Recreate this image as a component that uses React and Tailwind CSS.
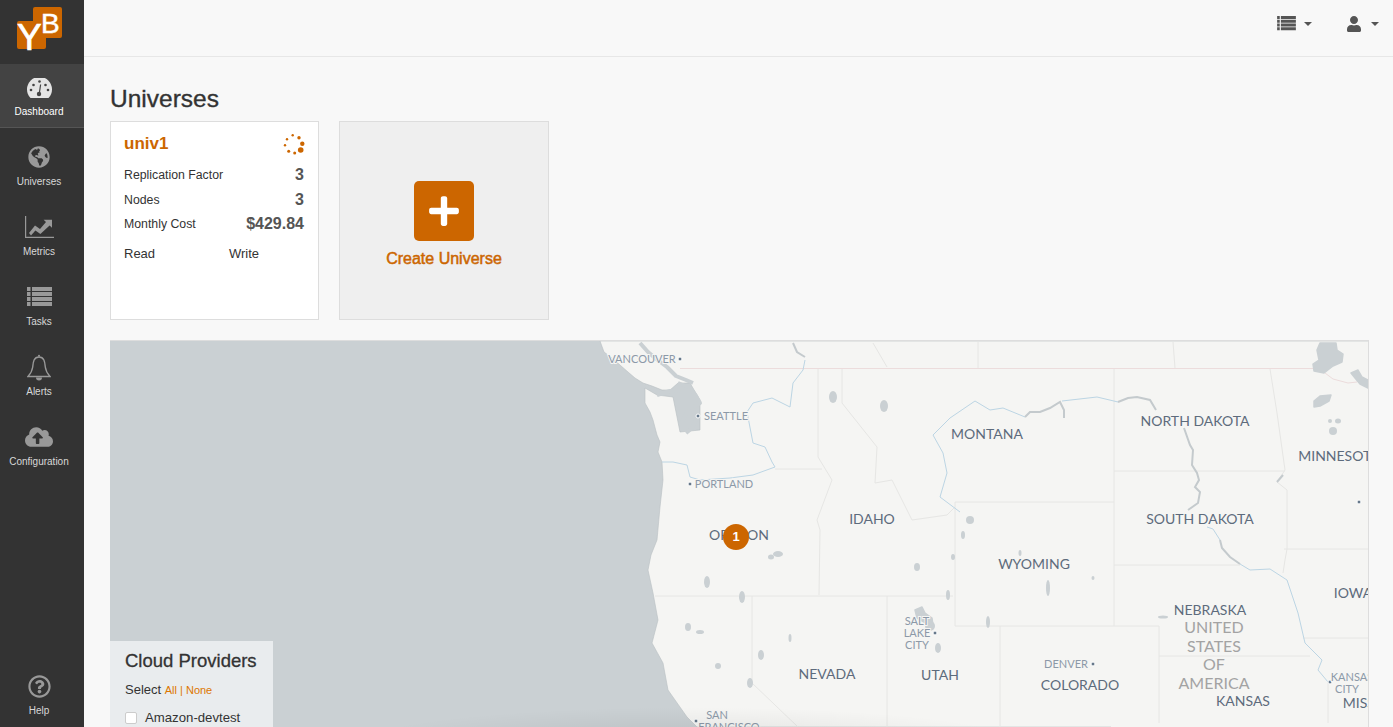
import React from 'react';
import { FaGlobeAmericas, FaCloudUploadAlt, FaRegQuestionCircle, FaUser, FaPlus } from 'react-icons/fa';

const ListIcon = ({ className }) => (
  <svg viewBox="0 0 25 20" className={className} fill="currentColor">
    {[0, 5, 10, 15].map((y) => (
      <g key={y}>
        <rect x="0" y={y} width="3.5" height="4" />
        <rect x="5" y={y} width="20" height="4" />
      </g>
    ))}
  </svg>
);

const MetricsIcon = ({ className }) => (
  <svg viewBox="0 0 29 22" className={className} fill="currentColor">
    <path d="M0 0h1.2v20.800H29V22H0z" />
    <path d="M4 17l6-7.500 5 3.400L21 6l-2.400-2.200H27v8l-2.400-2.300L15.400 18l-5-3.400L6 19.500z" />
  </svg>
);

const GaugeIcon = ({ className }) => (
  <svg viewBox="0 0 25 20" className={className}>
    <path d="M3.500 20A12.500 12.500 0 1 1 21.500 20Z" fill="currentColor" />
    {[[4, 12], [6.500, 7], [12.500, 3.500], [18.500, 7], [21, 12]].map(([cx, cy]) => (
      <circle key={cx} cx={cx} cy={cy} r="1.300" fill="#434343" />
    ))}
    <path d="M12.300 15.500L13.600 6.500" stroke="#434343" strokeWidth="1.200" />
    <circle cx="12" cy="16" r="2.200" fill="#434343" />
  </svg>
);

const BellIcon = ({ className }) => (
  <svg viewBox="0 0 24 27" className={className} fill="none" stroke="currentColor" strokeWidth="1.400">
    <path d="M12 3C6.500 3 6.200 8.500 5.700 13C5.200 17.500 3.200 20 1 22.500H23C20.800 20 18.800 17.500 18.300 13C17.800 8.500 17.500 3 12 3Z" />
    <circle cx="12" cy="1.800" r="1" fill="currentColor" stroke="none" />
    <path d="M9 23.500a3 3 0 0 0 6 0z" fill="currentColor" stroke="none" />
  </svg>
);

const Logo = () => (
  <svg viewBox="0 0 84 64" className="w-[84px] h-[64px] shrink-0">
    <path
      d="M35 7h25a2 2 0 0 1 2 2v27a2 2 0 0 1-2 2H46v9a2 2 0 0 1-2 2H19a2 2 0 0 1-2-2V23a2 2 0 0 1 2-2h14V9a2 2 0 0 1 2-2z"
      fill="#cc6600"
    />
    <text x="17" y="49.500" fontSize="37" fill="#fff" stroke="#fff" strokeWidth="0.700" fontFamily="Liberation Sans, sans-serif">Y</text>
    <text x="41" y="33" fontSize="28" fill="#fff" stroke="#fff" strokeWidth="0.500" fontFamily="Liberation Sans, sans-serif">B</text>
  </svg>
);

const navItems = [
  { label: 'Universes', icon: <FaGlobeAmericas className="w-[22px] h-[22px]" /> },
  { label: 'Metrics', icon: <MetricsIcon className="w-[29px] h-[22px]" /> },
  { label: 'Tasks', icon: <ListIcon className="w-[25px] h-[20px]" /> },
  { label: 'Alerts', icon: <BellIcon className="w-[24px] h-[27px]" /> },
  { label: 'Configuration', icon: <FaCloudUploadAlt className="w-[28px] h-[24px]" /> },
];

const NavItem = ({ icon, label }) => (
  <div className="h-[70px] pt-[18px] pr-[6px] flex flex-col items-center">
    <div className="h-[22px] flex items-center justify-center text-[#999]">{icon}</div>
    <div className="mt-[7px] text-[10px] leading-[14px] text-[#d8d8d8]">{label}</div>
  </div>
);

const Sidebar = () => (
  <aside className="w-[84px] shrink-0 h-full bg-[#333] flex flex-col">
    <Logo />
    <div className="h-[64px] pt-[13px] pr-[6px] bg-[#434343] border-b border-b-[#555] flex flex-col items-center">
      <div className="h-[22px] flex items-center text-[#e4e4e4]">
        <GaugeIcon className="w-[25px] h-[20px]" />
      </div>
      <div className="mt-[6px] text-[10px] leading-[14px] text-white">Dashboard</div>
    </div>
    {navItems.map((item) => (
      <NavItem key={item.label} {...item} />
    ))}
    <div className="mt-auto">
      <NavItem label="Help" icon={<FaRegQuestionCircle className="w-[23px] h-[23px]" />} />
    </div>
  </aside>
);

const Caret = () => (
  <span className="w-0 h-0 border-x-[4px] border-x-transparent border-t-[4px] border-t-[#555]" />
);

const Header = () => (
  <header className="h-[57px] shrink-0 border-b border-[#e7e7e7] flex items-center justify-end pr-[14px] pb-[9px] text-[#555]">
    <ListIcon className="w-[19px] h-[15px]" />
    <span className="ml-[8px] flex"><Caret /></span>
    <FaUser className="ml-[35px] w-[14px] h-[16px]" />
    <span className="ml-[10px] flex"><Caret /></span>
  </header>
);

const spinnerDots = [
  [292.7, 133.3, 1.2], [299, 135.7, 1.700], [302.3, 141.7, 2.2], [300.700, 148, 2.800],
  [294.7, 151, 1.500], [288.7, 149.3, 1.500], [285, 143.3, 1.200], [287, 137.3, 1.200],
];

const StatRow = ({ label, value }) => (
  <div className="flex items-center justify-between h-[24.500px]">
    <span className="text-[12.300px] text-[#333]">{label}</span>
    <span className="text-[16px] font-bold text-[#555]">{value}</span>
  </div>
);

const UniverseCard = () => (
  <div className="w-[209px] h-[199px] bg-white border border-[#ddd] pl-[13px] pr-[14px] pt-[11px]">
    <div className="flex items-center justify-between h-[22px]">
      <span className="text-[17px] font-bold text-[#cc6600]">univ1</span>
      <svg viewBox="283 131 22 22" className="w-[22px] h-[22px] mr-[-1px]" fill="#cc6600">
        {spinnerDots.map(([cx, cy, r]) => (
          <circle key={cx} cx={cx} cy={cy} r={r} />
        ))}
      </svg>
    </div>
    <div className="mt-[8px]">
      <StatRow label="Replication Factor" value="3" />
      <StatRow label="Nodes" value="3" />
      <StatRow label="Monthly Cost" value="$429.84" />
    </div>
    <div className="mt-[7.500px] flex text-[13px] text-[#333]">
      <span className="w-[105px]">Read</span>
      <span>Write</span>
    </div>
  </div>
);

const CreateCard = () => (
  <div className="w-[210px] h-[199px] bg-[#efefef] border border-[#ddd] flex flex-col items-center pt-[59px]">
    <div className="w-[60px] h-[60px] rounded-[5px] bg-[#cc6600] flex items-center justify-center text-white">
      <FaPlus className="w-[34px] h-[34px]" />
    </div>
    <div className="mt-[9px] text-[16px] leading-[18px] text-[#cc6600] [-webkit-text-stroke:0.5px_#cc6600]">Create Universe</div>
  </div>
);

const land =
  'M600 341 L604 352 L612 358 L620 365 L628 372 L635 378 L643 383 L652 386 L662 390 L670 390 L678 383 L690 383 L700 400 L700 430 L680 432 L673 397 L657 395 L645 388 L645 403 L650 412 L653 420 L657 435 L660 442 L658 452 L662 462 L663 480 L660 507 L657 540 L651 555 L648 570 L653 593 L658 620 L652 643 L663 663 L668 690 L687 717 L697 727 L1369 727 L1369 341 Z';

const sound = [
  'M640 343 L648 352 L655 358 L667 367 L676 376 L686 380 L693 383',
  'M678 383 L690 388 L696 396 L700 403 L692 408 L687 412 L682 422',
  'M692 408 L697 418 L692 428 L686 433',
  'M657 395 L670 391 L680 390',
];

const borders = [
  'M818 369 V457 L832 480 L817 520 L820 530 L819 595',
  'M775 469 H822',
  'M655 596 H953',
  'M752 596 V683 L798 727',
  'M887 596 V727',
  'M842 369 V403 L877 447 L875 483 L892 480 L912 520 L947 515 L955 507',
  'M955 502 H1114 M955 502 V626 H1159 M1114 369 V626',
  'M1000 626 V727 M1159 626 V727 M1159 656 H1310',
  'M1114 471 H1285 M1114 565 H1240',
  'M1270 369 L1277 413 L1285 470 L1277 482 L1287 490 V549 L1285 560 L1283 573',
  'M1284 549 H1369 M1303 638 H1369 M1328 682 V727',
  'M978 342 V368 M873 343 L887 367 M1173 342 L1175 368',
];

const rivers = [
  'M805 360 L803 370 L793 383 L790 407 L772 398 L753 403 L747 412 L753 443 L765 447 L772 462 L775 467 L753 475 L730 478 L700 480 L690 477 L687 465 L673 462 L662 462',
  'M1240 564 L1250 570 L1270 569 L1287 580 L1298 613 L1305 643 L1322 660 L1318 670 L1328 682',
  'M1207 527 L1213 529 L1220 540',
  'M990 410 L975 401 L950 418 L933 435 L943 453 L947 473 L940 497 L960 512',
  'M990 410 L1003 408 L1025 417 M1062 401 L1097 397 L1118 402',
];

const wideRivers = [
  'M793 343 L797 352 L805 357',
  'M1184 428 L1190 445 L1193 450 L1192 465 L1197 473 L1199 480 L1195 487 L1200 492 L1198 503 L1188 510',
  'M1220 540 L1222 548 L1230 557 L1240 564',
  'M1025 417 L1030 412 L1040 412 L1050 408 L1060 402 L1064 410 L1064 418',
  'M1118 402 L1128 398 L1137 397 L1150 400 L1156 410',
  'M1277 482 L1283 475',
];

const lakes = [
  [833, 397, 4, 6], [884, 406, 4, 6], [707, 582, 3, 6], [742, 597, 3, 6], [778, 554, 5, 3], [771, 557, 3, 2.5],
  [917, 567, 3, 4], [948, 595, 2, 5], [688, 627, 3, 4], [700, 632, 4, 2], [761, 655, 3, 5], [718, 666, 3, 3],
  [750, 683, 3, 5], [790, 638, 1.5, 4], [970, 520, 4, 4], [963, 535, 2, 4], [953, 557, 2, 3], [938, 648, 3, 5],
  [930, 626, 5, 5], [988, 622, 2, 6], [1048, 588, 2, 8], [1093, 578, 1.5, 2], [1020, 553, 1.5, 3],
  [1163, 617, 5, 1.5], [1330, 421, 2, 2], [1338, 421, 3, 2.5], [1333, 431, 4, 4],
];

const lakeBlobs = [
  'M1320 343 L1336 343 L1337 350 L1343 354 L1342 362 L1333 366 L1324 373 L1314 371 L1313 364 L1319 360 L1317 350 Z',
  'M1351 373 L1358 370 L1362 377 L1368 380 V388 L1360 384 L1355 378 Z',
  'M1314 401 L1320 396 L1331 395 L1329 401 L1320 406 L1314 407 Z',
  'M915 610 L922 607 L925 613 L932 618 L933 625 L924 622 L917 618 Z',
];

const stateLabels = [
  ['OREGON', 739, 534], ['IDAHO', 872, 518], ['MONTANA', 987, 433], ['NORTH DAKOTA', 1195, 420],
  ['SOUTH DAKOTA', 1200, 518], ['WYOMING', 1034, 563], ['NEBRASKA', 1210, 609], ['KANSAS', 1243, 700],
  ['NEVADA', 827, 673], ['UTAH', 940, 674], ['COLORADO', 1080, 684], ['MINNESOTA', 1339, 455],
  ['IOWA', 1353, 592], ['MISSOURI', 1376, 702],
];

const cityLabels = [
  ['VANCOUVER', 642, 358], ['SEATTLE', 726, 415], ['PORTLAND', 724, 483], ['DENVER', 1066, 663],
  ['SALT', 917, 620], ['LAKE', 917, 632], ['CITY', 917, 644], ['SAN', 717, 714], ['FRANCISCO', 729, 726],
  ['KANSAS', 1352, 676], ['CITY', 1347, 688],
];

const countryLabels = [['UNITED', 1214, 626], ['STATES', 1214, 645], ['OF', 1214, 663], ['AMERICA', 1214, 682]];

const cityDots = [[680, 359], [698, 416], [690, 484], [1093, 664], [935, 633], [696, 721], [1330, 682], [1359, 502]];

const MapLabel = ({ text, x, y, size, fill }) => (
  <text
    x={x}
    y={y}
    fontSize={size}
    fill={fill}
    textAnchor="middle"
    dominantBaseline="central"
    stroke="#f5f5f3"
    strokeWidth="2"
    paintOrder="stroke"
  >
    {text}
  </text>
);

const MapDrawing = () => (
  <svg viewBox="110 341 1258 386" className="block w-[1258px] h-[386px] font-['Lato',sans-serif]">
    <defs>
      <radialGradient id="vignette">
        <stop offset="0" stopColor="#000" stopOpacity="0.09" />
        <stop offset="1" stopColor="#000" stopOpacity="0" />
      </radialGradient>
    </defs>
    <rect x="110" y="341" width="1258" height="386" fill="#cad0d3" />
    <path d={land} fill="#f5f5f3" stroke="#b9bfc2" strokeWidth="0.6" />
    {sound.map((d) => (
      <path key={d} d={d} fill="none" stroke="#cad0d3" strokeWidth="4" strokeLinejoin="round" />
    ))}
    <path d="M680 368.500 H1320 L1325 373 L1333 379 L1348 383 L1357 382" fill="none" stroke="#ecdcdc" strokeWidth="1" />
    {borders.map((d) => (
      <path key={d} d={d} fill="none" stroke="#e6e6e4" strokeWidth="1" />
    ))}
    {rivers.map((d) => (
      <path key={d} d={d} fill="none" stroke="#bcd5e4" strokeWidth="1" />
    ))}
    {wideRivers.map((d) => (
      <path key={d} d={d} fill="none" stroke="#c4cacd" strokeWidth="2" />
    ))}
    {lakes.map(([cx, cy, rx, ry]) => (
      <ellipse key={`${cx}-${cy}`} cx={cx} cy={cy} rx={rx} ry={ry} fill="#cad0d3" />
    ))}
    {lakeBlobs.map((d) => (
      <path key={d} d={d} fill="#cad0d3" stroke="#cad0d3" strokeWidth="1.500" strokeLinejoin="round" />
    ))}
    {cityDots.map(([cx, cy]) => (
      <circle key={cx} cx={cx} cy={cy} r="2" fill="#66788a" stroke="#fff" strokeWidth="1" />
    ))}
    {stateLabels.map(([text, x, y]) => (
      <MapLabel key={text} text={text} x={x} y={y} size={14} fill="#5d6b7c" />
    ))}
    {cityLabels.map(([text, x, y]) => (
      <MapLabel key={text + y} text={text} x={x} y={y} size={11} fill="#8c99a8" />
    ))}
    {countryLabels.map(([text, x, y]) => (
      <MapLabel key={text} text={text} x={x} y={y} size={16} fill="#a3a3a3" />
    ))}
    <ellipse cx="690" cy="745" rx="340" ry="38" fill="url(#vignette)" />
  </svg>
);

const WorldMap = () => (
  <div className="relative w-[1259px] h-[420px] shrink-0 border-t border-r border-[#ddd] overflow-hidden">
    <MapDrawing />
    <div className="absolute left-[613px] top-[183px] w-[26px] h-[26px] rounded-full bg-[#cc6600] text-white text-[13px] font-bold flex items-center justify-center">
      1
    </div>
    <div className="absolute left-0 top-[300px] w-[163px] h-[120px] bg-[#e9ecee] pl-[15px] pt-[8px] text-[#333]">
      <div className="text-[18.500px] leading-[24px] [-webkit-text-stroke:0.3px_#333]">Cloud Providers</div>
      <div className="mt-[7px] text-[13px] leading-[20px]">
        Select <span className="text-[11px] text-[#dd7700]">All | None</span>
      </div>
      <label className="mt-[9px] flex items-center gap-[8px] text-[13.200px] leading-[18px]">
        <span className="w-[12px] h-[12px] rounded-[2px] bg-white border border-[#ccc]" />
        Amazon-devtest
      </label>
    </div>
    <div className="absolute right-0 top-[382px] h-[20px] px-[5px] bg-[#f5f5f3] text-[11px] leading-[16px] text-[#333]">
      <span className="text-[#0078a8]">Leaflet</span> | © <span className="text-[#0078a8]">OpenStreetMap</span> contributors, © <span className="text-[#0078a8]">CARTO</span>
    </div>
  </div>
);

const App = () => (
  <div className="flex h-screen overflow-hidden bg-[#f8f8f8] font-['Liberation_Sans',Arial,sans-serif]">
    <Sidebar />
    <main className="flex-1 flex flex-col min-w-0">
      <Header />
      <div className="pl-[26px] flex flex-col">
        <h1 className="mt-[27px] h-[37px] text-[24.500px] leading-[30px] text-[#333] [-webkit-text-stroke:0.35px_#333]">Universes</h1>
        <div className="flex gap-[20px]">
          <UniverseCard />
          <CreateCard />
        </div>
        <div className="mt-[20px]">
          <WorldMap />
        </div>
      </div>
    </main>
  </div>
);

export default App;
